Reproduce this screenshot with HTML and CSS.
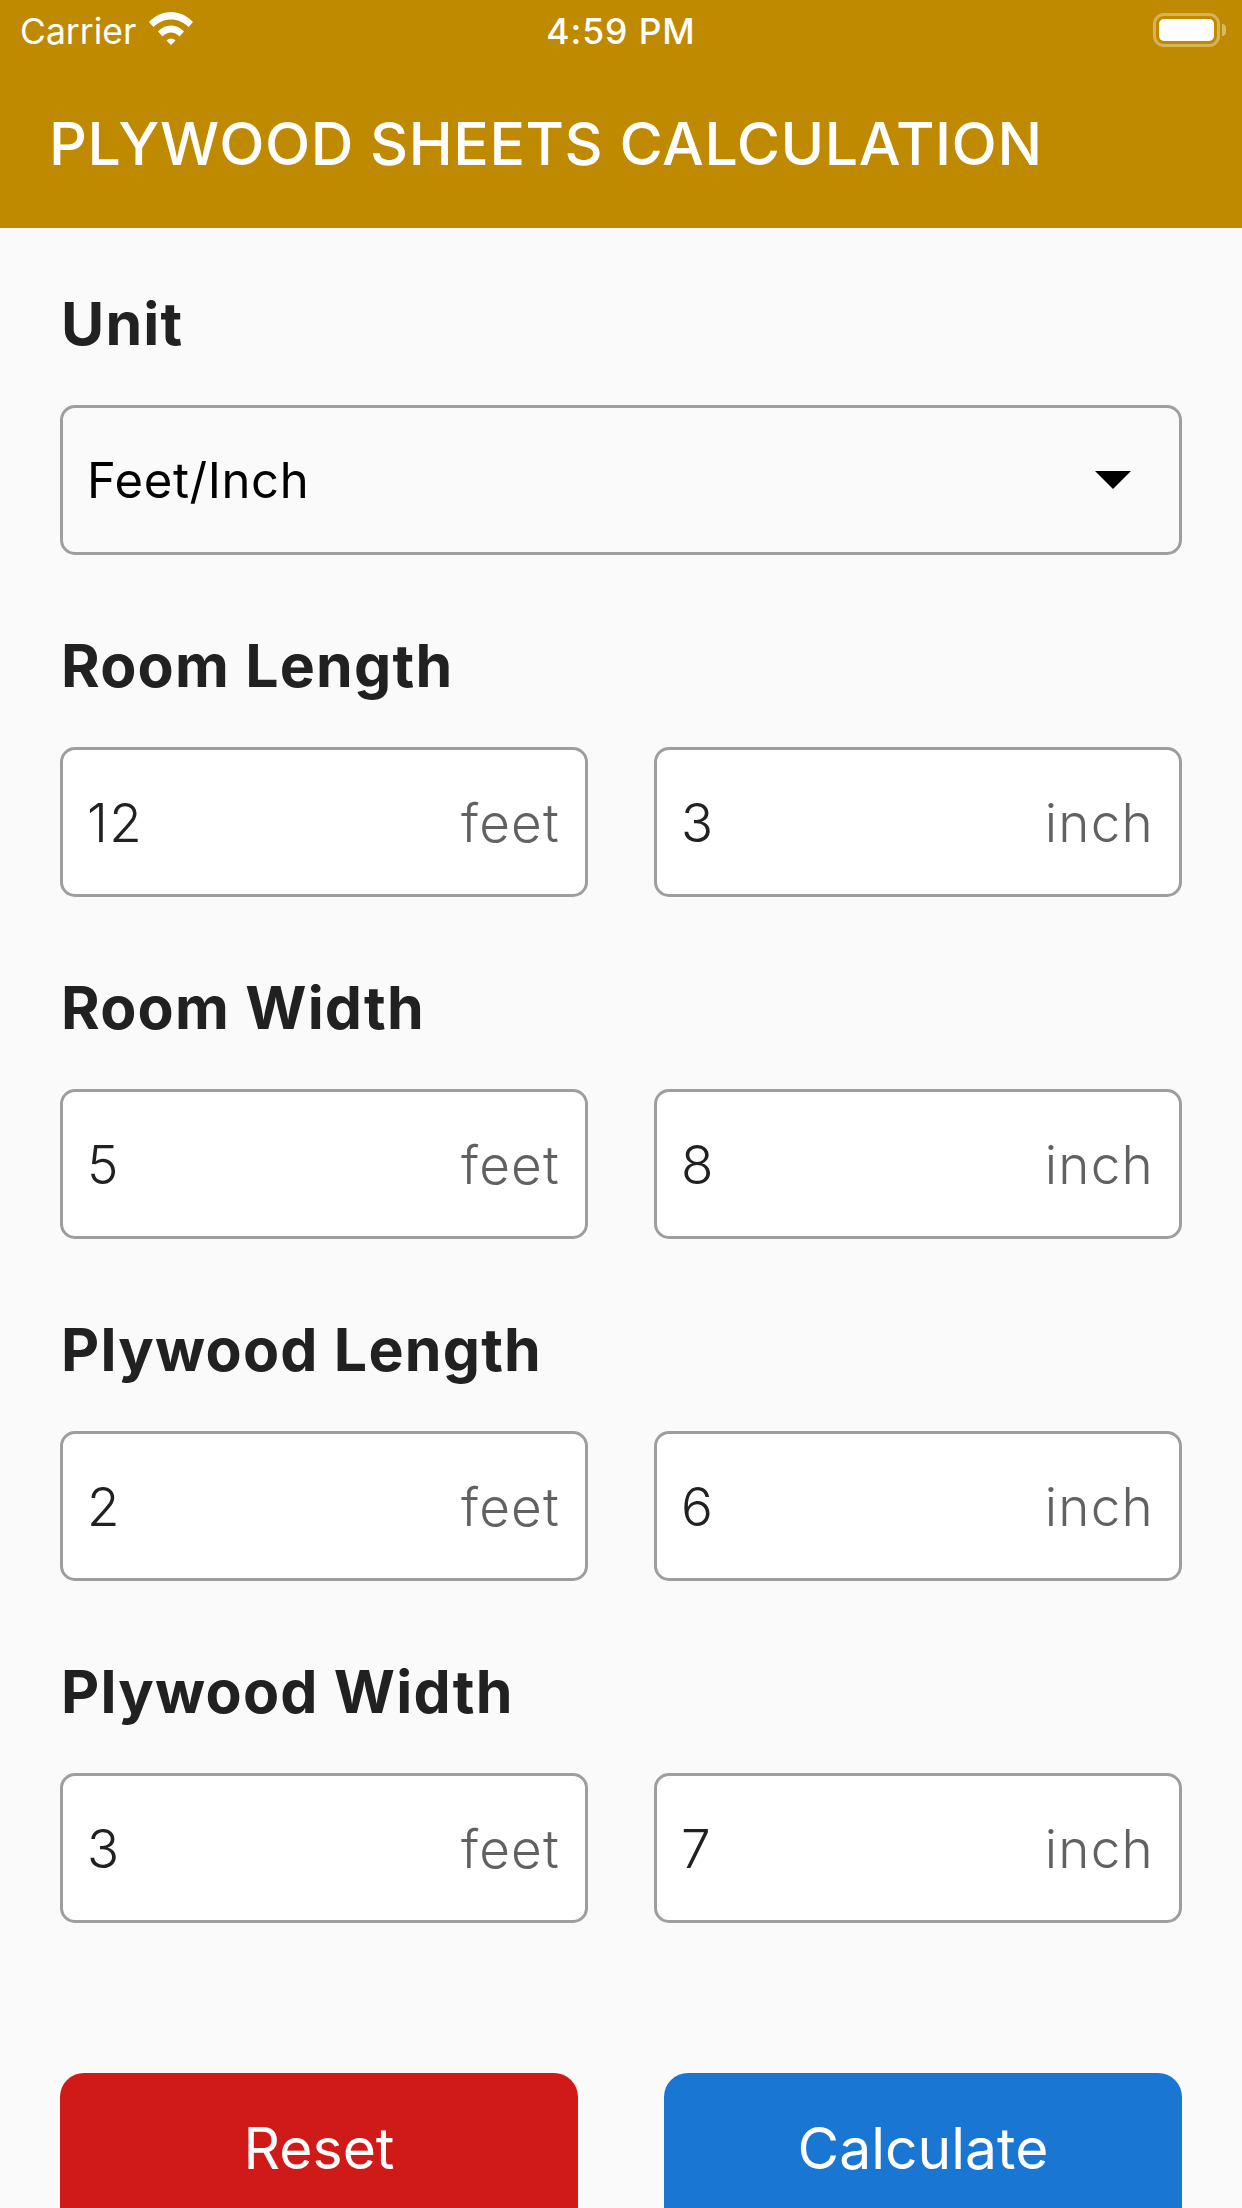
FILE: index.html
```html
<!DOCTYPE html>
<html lang="en">
<head>
    <meta charset="UTF-8">
    <meta name="viewport" content="width=device-width, initial-scale=1.0">
    <title>Plywood Sheets Calculation</title>
    <link rel="stylesheet" href="styles.css">
</head>
<body>

<header class="app-header">
    <div class="status-bar">
        <div class="status-left">
            <span>Carrier</span>
            <svg class="wifi-icon" viewBox="0 0 44 33" width="44" height="33" fill="#fff">
                <path d="M0 10C6 3.5 14 0 22 0C30 0 38 3.5 44 10L39.5 15C34.5 10 28.5 7.5 22 7.5C15.5 7.5 9.5 10 4.5 15Z"/>
                <path d="M9 19.5C12.5 15.8 17 13.5 22 13.5C27 13.5 31.5 15.8 35 19.5L30.5 24.5C28 22 25 20.5 22 20.5C19 20.5 16 22 13.5 24.5Z"/>
                <path d="M17.5 28.5C18.7 27.2 20.3 26.5 22 26.5C23.7 26.5 25.3 27.2 26.5 28.5L22 33Z"/>
            </svg>
        </div>
        <div class="status-time">4:59 PM</div>
        <div class="status-right">
            <div class="battery"><div class="battery-level"></div></div>
            <div class="battery-nub"></div>
        </div>
    </div>
    <h1 class="app-title">PLYWOOD SHEETS CALCULATION</h1>
</header>

<main class="form-container">
    <section class="form-group">
        <h2 class="group-label">Unit</h2>
        <div class="field select-field">
            <span class="select-value">Feet/Inch</span>
            <span class="select-arrow"></span>
        </div>
    </section>

    <section class="form-group">
        <h2 class="group-label">Room Length</h2>
        <div class="field-row">
            <div class="field"><span class="field-value">12</span><span class="field-unit">feet</span></div>
            <div class="field"><span class="field-value">3</span><span class="field-unit">inch</span></div>
        </div>
    </section>

    <section class="form-group">
        <h2 class="group-label">Room Width</h2>
        <div class="field-row">
            <div class="field"><span class="field-value">5</span><span class="field-unit">feet</span></div>
            <div class="field"><span class="field-value">8</span><span class="field-unit">inch</span></div>
        </div>
    </section>

    <section class="form-group">
        <h2 class="group-label">Plywood Length</h2>
        <div class="field-row">
            <div class="field"><span class="field-value">2</span><span class="field-unit">feet</span></div>
            <div class="field"><span class="field-value">6</span><span class="field-unit">inch</span></div>
        </div>
    </section>

    <section class="form-group">
        <h2 class="group-label">Plywood Width</h2>
        <div class="field-row">
            <div class="field"><span class="field-value">3</span><span class="field-unit">feet</span></div>
            <div class="field"><span class="field-value">7</span><span class="field-unit">inch</span></div>
        </div>
    </section>

    <div class="button-row">
        <button type="button" class="btn btn-reset">Reset</button>
        <button type="button" class="btn btn-calculate">Calculate</button>
    </div>
</main>

</body>
</html>
```

FILE: styles.css
```css
* {
    box-sizing: border-box;
}
html, body {
    height: 100%;
    overflow: hidden;
}
body {
    margin: 0;
    font-family: Inter, "Noto Sans", sans-serif;
    background-color: #fafafa;
    color: #212121;
}
.app-header {
    height: 228px;
    background-color: #bf8a00;
    color: #fff;
}
.status-bar {
    height: 60px;
    padding: 2px 16px 0;
    display: grid;
    grid-template-columns: 1fr auto 1fr;
    align-items: center;
    font-size: 35.5px;
}
.status-left {
    display: flex;
    align-items: center;
    gap: 13px;
    padding-left: 4px;
}
.wifi-icon {
    margin-top: -5px;
}
.status-time {
    font-weight: 500;
    letter-spacing: 0.9px;
}
.status-right {
    display: flex;
    align-items: center;
    justify-content: flex-end;
    gap: 2px;
    margin-top: -2px;
}
.battery {
    width: 67px;
    height: 34px;
    padding: 3px;
    border: 3px solid rgba(255, 255, 255, 0.35);
    border-radius: 11px;
}
.battery-level {
    height: 100%;
    background: #fff;
    border-radius: 5px;
}
.battery-nub {
    width: 4px;
    height: 12px;
    background: rgba(255, 255, 255, 0.4);
    border-radius: 0 4px 4px 0;
}
.app-title {
    margin: 0;
    padding-left: 49px;
    height: 168px;
    line-height: 168px;
    font-size: 59px;
    font-weight: 500;
    letter-spacing: 0.55px;
}
.form-container {
    padding: 60px 60px 0;
}
.form-group {
    margin-bottom: 75px;
}
.group-label {
    margin: 0 0 45px;
    padding-left: 1px;
    height: 72px;
    line-height: 72px;
    font-size: 59px;
    font-weight: 700;
    letter-spacing: 1.2px;
}
.field-row {
    display: grid;
    grid-template-columns: 1fr 1fr;
    gap: 66px;
}
.field {
    height: 150px;
    padding: 2px 25px 0 24px;
    display: flex;
    align-items: center;
    justify-content: space-between;
    background: #fff;
    border: 3px solid #9e9e9e;
    border-radius: 15px;
    font-size: 53px;
    font-weight: 350;
    letter-spacing: 0.5px;
}
.select-field {
    background: transparent;
    color: #000;
    padding: 0 48px 0 24px;
    font-size: 49px;
    font-weight: 400;
    letter-spacing: 0.6px;
}
.select-arrow {
    width: 0;
    height: 0;
    border-left: 18px solid transparent;
    border-right: 18px solid transparent;
    border-top: 18px solid #000;
}
.field-value {
    letter-spacing: 1.5px;
}
.field-unit {
    color: #616161;
    letter-spacing: 1.2px;
}
.button-row {
    margin-top: 150px;
    display: flex;
    justify-content: space-between;
}
.btn {
    width: 518px;
    height: 158px;
    flex-shrink: 0;
    border: none;
    border-radius: 24px;
    color: #fff;
    font-family: inherit;
    font-size: 57px;
    padding: 0 0 8px;
}
.btn-reset {
    background-color: #d01a18;
}
.btn-calculate {
    background-color: #1976d2;
}
```
